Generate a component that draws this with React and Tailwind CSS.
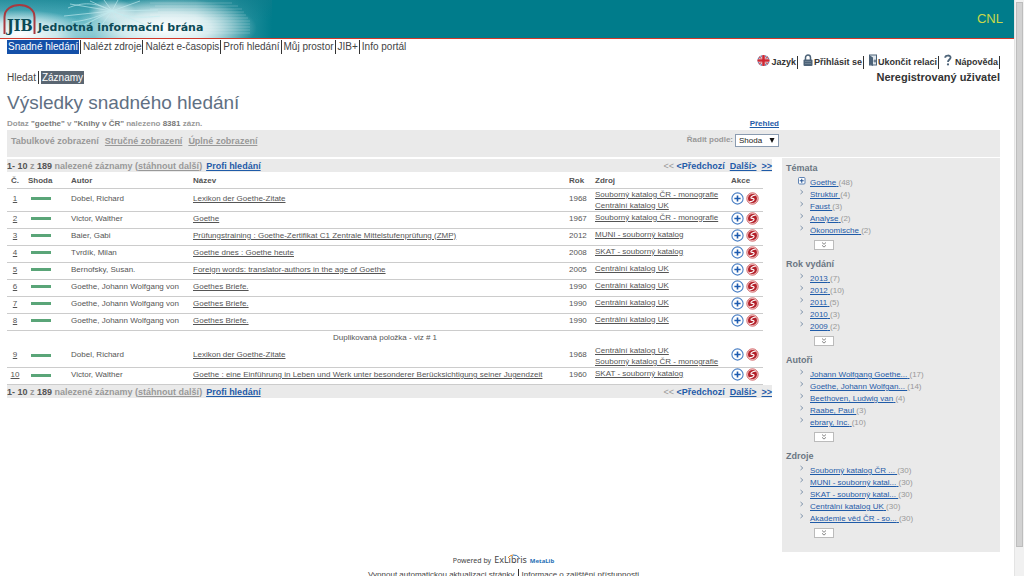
import React, { useState } from 'react';

const mainTabs = ['Snadné hledání', 'Nalézt zdroje', 'Nalézt e-časopis', 'Profi hledání', 'Můj prostor', 'JIB+', 'Info portál'];

const MONO = 'Souborný katalog ČR - monografie';
const UK = 'Centrální katalog UK';
const SKAT = 'SKAT - souborný katalog';

const records = [
  { id: 1, author: 'Dobel, Richard', title: 'Lexikon der Goethe-Zitate', year: 1968, sources: [MONO, UK] },
  { id: 2, author: 'Victor, Walther', title: 'Goethe', year: 1967, sources: [MONO] },
  { id: 3, author: 'Baier, Gabi', title: 'Prüfungstraining : Goethe-Zertifikat C1 Zentrale Mittelstufenprüfung (ZMP)', year: 2012, sources: ['MUNI - souborný katalog'] },
  { id: 4, author: 'Tvrdík, Milan', title: 'Goethe dnes : Goethe heute', year: 2008, sources: [SKAT] },
  { id: 5, author: 'Bernofsky, Susan.', title: 'Foreign words: translator-authors in the age of Goethe', year: 2005, sources: [UK] },
  { id: 6, author: 'Goethe, Johann Wolfgang von', title: 'Goethes Briefe.', year: 1990, sources: [UK] },
  { id: 7, author: 'Goethe, Johann Wolfgang von', title: 'Goethes Briefe.', year: 1990, sources: [UK] },
  { id: 8, author: 'Goethe, Johann Wolfgang von', title: 'Goethes Briefe.', year: 1990, sources: [UK] },
  { id: 9, duplicateOf: 1, author: 'Dobel, Richard', title: 'Lexikon der Goethe-Zitate', year: 1968, sources: [UK, MONO] },
  { id: 10, author: 'Victor, Walther', title: 'Goethe : eine Einführung in Leben und Werk unter besonderer Berücksichtigung seiner Jugendzeit', year: 1960, sources: [SKAT] },
];

const facets = [
  { title: 'Témata', items: [['Goethe', 48], ['Struktur', 4], ['Faust', 3], ['Analyse', 2], ['Ökonomische', 2]], expandable: true },
  { title: 'Rok vydání', items: [['2013', 7], ['2012', 10], ['2011', 5], ['2010', 3], ['2009', 2]] },
  { title: 'Autoři', items: [['Johann Wolfgang Goethe...', 17], ['Goethe, Johann Wolfgan...', 14], ['Beethoven, Ludwig van', 4], ['Raabe, Paul', 3], ['ebrary, Inc.', 10]] },
  { title: 'Zdroje', items: [['Souborný katalog ČR ...', 30], ['MUNI - souborný katal...', 30], ['SKAT - souborný katal...', 30], ['Centrální katalog UK', 30], ['Akademie věd ČR - so...', 30]] },
];

// Icons
const FlagIcon = () => (
  <svg width="13" height="13" viewBox="0 0 13 13" aria-hidden="true">
    <defs>
      <clipPath id="flag"><ellipse cx="6.5" cy="6.5" rx="6" ry="5.5" /></clipPath>
    </defs>
    <g clipPath="url(#flag)">
      <rect width="13" height="13" fill="#4a5f96" />
      <path d="M0 1 L13 12 M13 1 L0 12" stroke="#e6dfe6" strokeWidth="2.4" />
      <path d="M0 1 L13 12 M13 1 L0 12" stroke="#c8404a" strokeWidth="1.2" />
      <path d="M6.5 0V13M0 6.5H13" stroke="#f2ecee" strokeWidth="3.6" />
      <path d="M6.5 0V13M0 6.5H13" stroke="#cf2733" strokeWidth="2.6" />
    </g>
  </svg>
);

const LockIcon = () => (
  <svg width="10" height="13" viewBox="0 0 10 13" aria-hidden="true">
    <path d="M2.5 6V3.6a2.5 2.7 0 0 1 5 0V6" fill="none" stroke="#4d6378" strokeWidth="1.5" />
    <rect x="0.5" y="5.5" width="9" height="6.5" rx="1" fill="#4d6378" />
    <path d="M2 7.5h6M2 9.5h6" stroke="#8496a6" strokeWidth="0.6" />
  </svg>
);

const ExitIcon = () => (
  <svg width="8" height="13" viewBox="0 0 8 13" aria-hidden="true">
    <rect x="0.5" y="1" width="7" height="10" fill="#dfe6ec" stroke="#4d6378" />
    <path d="M1 1.5 L4 3.5V12L1 10.5Z" fill="#4d6378" />
    <path d="M4.5 7h2.5M6 5.5v3" stroke="#4d6378" strokeWidth="1" />
  </svg>
);

const HelpIcon = () => (
  <svg width="10" height="13" viewBox="0 0 10 13" aria-hidden="true">
    <path d="M1.2 3.8C1.2 0.8 6.6 0.8 6.6 3.6C6.6 5.4 4 5.6 4 8" fill="none" stroke="#4d6378" strokeWidth="1.8" />
    <circle cx="4" cy="10.4" r="1.1" fill="#4d6378" />
  </svg>
);

const AddIcon = () => (
  <svg width="13" height="13" viewBox="0 0 13 13" aria-hidden="true">
    <circle cx="6.5" cy="6.5" r="5.6" fill="#fff" stroke="#4a7fc4" strokeWidth="1.1" />
    <path d="M6.5 3.4v6.2M3.4 6.5h6.2" stroke="#1d5bb0" strokeWidth="1.6" />
  </svg>
);

const SfxIcon = () => (
  <svg width="13" height="13" viewBox="0 0 13 13" aria-hidden="true">
    <circle cx="6.5" cy="6.5" r="5.7" fill="#f3cfcf" stroke="#cf5a5e" strokeWidth="0.9" />
    <circle cx="6.5" cy="6.5" r="4.5" fill="#b3202a" />
    <path d="M9.6 3.4C7.6 3 4.6 4.4 4.9 5.8C5.2 6.8 7.8 6 8.1 7.2C8.4 8.6 5.6 9.9 3.4 9.6" fill="none" stroke="#fff" strokeWidth="1.1" />
  </svg>
);

const DoubleDown = () => (
  <svg width="6" height="6" viewBox="0 0 6 6" aria-hidden="true">
    <path d="M1 0.5L3 2.3L5 0.5M1 3.3L3 5.1L5 3.3" fill="none" stroke="#777" strokeWidth="0.9" />
  </svg>
);

const BannerArt = () => (
  <svg className="absolute inset-0" width="272" height="38" viewBox="0 0 272 38" aria-hidden="true">
    <defs>
      <linearGradient id="sweep" x1="0" x2="1" y1="0" y2="0">
        <stop offset="0" stopColor="#5fb4c2" />
        <stop offset="0.25" stopColor="#4fafbd" />
        <stop offset="0.5" stopColor="#6cbcc7" />
        <stop offset="0.72" stopColor="#8ccad2" />
        <stop offset="0.88" stopColor="#2b93a0" />
        <stop offset="1" stopColor="#007c8b" />
      </linearGradient>
      <radialGradient id="glow">
        <stop offset="0" stopColor="#fff" />
        <stop offset="0.5" stopColor="#fff" stopOpacity="0.7" />
        <stop offset="1" stopColor="#fff" stopOpacity="0" />
      </radialGradient>
      <linearGradient id="shade" x1="0" x2="0" y1="0" y2="1">
        <stop offset="0" stopColor="#0d7c8b" stopOpacity="0.65" />
        <stop offset="1" stopColor="#0d7c8b" stopOpacity="0" />
      </linearGradient>
    </defs>
    <rect width="272" height="38" fill="url(#sweep)" />
    <rect width="272" height="20" fill="url(#shade)" />
    <ellipse cx="20" cy="34" rx="75" ry="24" fill="url(#glow)" />
    <ellipse cx="165" cy="28" rx="92" ry="30" fill="url(#glow)" />
    <ellipse cx="112" cy="11" rx="24" ry="12" fill="url(#glow)" opacity="0.6" />
    <g fill="none" stroke="#c4ecf0" strokeWidth="0.8" opacity="0.8">
      <path d="M112 11L70 4M112 11L64 16M112 11L80 27M112 11L98 30M112 11L122 30M112 11L146 25M112 11L158 10M112 11L140 1M112 11L104 0M112 11L90 1M112 11L118 0" />
      <path d="M68 8C82 2 96 2 112 11C128 18 142 18 160 16M72 22C90 20 98 16 112 11" />
    </g>
    <g stroke="#fff" strokeWidth="0.8" opacity="0.25">
      <path d="M150 3H232M155 6H238M150 9H242M158 12H244M150 15H246M160 18H248M150 21H250M165 24H250M170 27H250M175 30H250M180 33H250" />
    </g>
    <path d="M4.5 34V17C4.5 1 34.5 1 34.5 17V34" fill="none" stroke="#a83a40" strokeWidth="2" />
  </svg>
);

const Banner = () => (
  <header className="relative h-[39px] flex items-center justify-between bg-[#007c8b] border-b border-[#d0392b]">
    <BannerArt />
    <div className="relative flex items-baseline self-end pl-[7px] text-[#0b4a56]">
      <span className="w-[31px] font-['DejaVu_Serif_Condensed','DejaVu_Serif',serif] text-[16px] leading-[24px] font-bold">JIB</span>
      <span className="font-['DejaVu_Sans',sans-serif] text-[11px] leading-[14px] font-bold whitespace-nowrap">Jednotná informační brána</span>
    </div>
    <span className="pr-[11px] text-[13px] text-[#c9d84a]">CNL</span>
  </header>
);

const UserLinks = () => {
  const links = [
    { label: 'Jazyk', icon: FlagIcon },
    { label: 'Přihlásit se', icon: LockIcon },
    { label: 'Ukončit relaci', icon: ExitIcon },
    { label: 'Nápověda', icon: HelpIcon },
  ];
  return (
    <div className="flex justify-end gap-[5px] h-[15px] text-[9px] leading-[13px] font-bold text-[#333]">
      {links.map(({ label, icon: Icon }) => (
        <a key={label} href="#" className="flex items-start gap-px">
          <Icon />
          <span className="mt-[2px] pr-px border-r border-[#333]">{label}</span>
        </a>
      ))}
    </div>
  );
};

const ResultsBar = () => (
  <div className="flex items-center justify-between h-[13px] bg-[#eaeaea] text-[9px] font-bold text-[#999]">
    <div className="flex gap-1">
      <span>
        <b className="text-[#555]">1- 10</b> z <b className="text-[#555]">189</b> nalezené záznamy (<a href="#" className="underline">stáhnout další</a>)
      </span>
      <a href="#" className="text-[#1f5ba8] underline">Profi hledání</a>
    </div>
    <div className="flex gap-[5px] text-[#1f5ba8]">
      <span><span className="font-normal text-[#999]">&lt;&lt;</span> &lt;Předchozí</span>
      <a href="#" className="underline">Další&gt;</a>
      <a href="#" className="underline">&gt;&gt;</a>
    </div>
  </div>
);

const RecordRow = ({ record }) => (
  <tr className="h-[17px] border-b border-[#ccc]">
    <td className="pb-[2px] text-center"><a href="#" className="underline">{record.id}</a></td>
    <td className="pb-[2px]"><div className="ml-2 w-5 h-[3px] bg-[#5aa578]"></div></td>
    <td className="pb-[2px] whitespace-nowrap">{record.author}</td>
    <td className="pb-[2px] whitespace-nowrap"><a href="#" className="underline">{record.title}</a></td>
    <td className="pb-[2px]">{record.year}</td>
    <td className="align-top whitespace-nowrap">
      {record.sources.map((s) => (
        <a key={s} href="#" className="block leading-[11px] underline">{s}</a>
      ))}
    </td>
    <td className="pb-[3px]">
      <div className="flex gap-[2px]">
        <button type="button" aria-label="Přidat do schránky"><AddIcon /></button>
        <button type="button" aria-label="SFX"><SfxIcon /></button>
      </div>
    </td>
  </tr>
);

const ResultsTable = () => (
  <div className="pr-[9px]">
    <table className="w-full table-fixed border-collapse text-left text-[#555]">
      <colgroup>
        <col className="w-[16px]" />
        <col className="w-[48px]" />
        <col className="w-[122px]" />
        <col />
        <col className="w-[26px]" />
        <col className="w-[136px]" />
        <col className="w-[32px]" />
      </colgroup>
      <thead>
        <tr className="h-[16px] border-b border-[#ccc]">
          <th className="pt-[2px] text-center">Č.</th>
          <th className="pt-[2px] pl-[5px]">Shoda</th>
          <th className="pt-[2px]">Autor</th>
          <th className="pt-[2px]">Název</th>
          <th className="pt-[2px]">Rok</th>
          <th className="pt-[2px]">Zdroj</th>
          <th className="pt-[2px]">Akce</th>
        </tr>
      </thead>
      <tbody>
        {records.map((r) => (
          <React.Fragment key={r.id}>
            {r.duplicateOf && (
              <tr className="h-[15px]">
                <td colSpan={7} className="text-center">Duplikovaná položka - viz # {r.duplicateOf}</td>
              </tr>
            )}
            <RecordRow record={r} />
          </React.Fragment>
        ))}
      </tbody>
    </table>
  </div>
);

const Facet = ({ facet }) => (
  <section className="mb-2">
    <h2 className="mb-[3px] text-[9px] leading-[12px] font-bold text-[#6b7683]">{facet.title}</h2>
    <ul>
      {facet.items.map(([label, count], i) => (
        <li key={label} className="flex h-[12px] leading-[12px] text-[#999]">
          <span className="w-6 pl-3">
            {facet.expandable && i === 0 ? (
              <svg width="8" height="8" viewBox="0 0 8 8" aria-hidden="true">
                <rect x="0.5" y="0.5" width="6.5" height="6.5" rx="1" fill="#fff" stroke="#5f83b3" />
                <path d="M3.75 1.8v4M1.75 3.75h4" stroke="#1f4f93" />
              </svg>
            ) : (
              <svg width="8" height="6" viewBox="0 0 8 6" aria-hidden="true">
                <path d="M2.5 1L4.8 3L2.5 5" fill="none" stroke="#7d92ab" strokeWidth="1" />
              </svg>
            )}
          </span>
          <span><a href="#" className="text-[#1f5ba8] underline">{label} </a>({count})</span>
        </li>
      ))}
    </ul>
    <button type="button" aria-label="Zobrazit další" className="flex items-center justify-center mt-[3px] ml-7 w-5 h-[10px] bg-white border border-[#bbb]">
      <DoubleDown />
    </button>
  </section>
);

const App = () => {
  const [sort, setSort] = useState('Shoda');

  return (
    <div className="flex h-screen overflow-hidden bg-white font-['Liberation_Sans',Arial,sans-serif] text-[8px] leading-[12px]">
      <div className="flex-1 min-w-0 overflow-hidden">
        <Banner />

        <div className="pl-[7px] pr-[14px]">
          <nav className="flex h-[15px] pt-px text-[10px] leading-[13px] text-[#444]">
            {mainTabs.map((tab, i) => (
              <a
                key={tab}
                href="#"
                className={i === 0 ? 'px-px mr-px bg-[#1450a8] text-white' : 'pl-[2px] pr-px border-l border-[#333]'}
              >
                {tab}
              </a>
            ))}
          </nav>

          <UserLinks />

          <div className="flex justify-between items-center h-[16px] text-[10px] leading-[13px]">
            <nav className="flex text-[#444]">
              <a href="#" className="pr-[2px] border-r border-[#333]">Hledat</a>
              <a href="#" className="ml-[2px] px-px bg-[#5a6672] text-white">Záznamy</a>
            </nav>
            <span className="text-[11px] font-bold text-[#333]">Neregistrovaný uživatel</span>
          </div>

          <h1 className="pt-[6px] text-[19px] leading-[24px] text-[#5f7083]">Výsledky snadného hledání</h1>

          <div className="flex justify-between h-[15px] pt-[3px] pr-[221px] font-bold text-[#999]">
            <p>Dotaz <b className="text-[#777]">"goethe"</b> v <b className="text-[#777]">"Knihy v ČR"</b> nalezeno <b className="text-[#777]">8381</b> zázn.</p>
            <a href="#" className="text-[#1f5ba8] underline">Přehled</a>
          </div>

          <div className="flex justify-between items-start h-[27px] pt-1 pl-1 pr-[221px] bg-[#eaeaea] font-bold text-[#999]">
            <div className="flex gap-[6px] pt-px text-[9px]">
              <span>Tabulkové zobrazení</span>
              <a href="#" className="underline">Stručné zobrazení</a>
              <a href="#" className="underline">Úplné zobrazení</a>
            </div>
            <div className="flex gap-[2px]">
              <label htmlFor="sort">Řadit podle:</label>
              <div className="relative">
                <select
                  id="sort"
                  value={sort}
                  onChange={(e) => setSort(e.target.value)}
                  className="block appearance-none w-11 h-[13px] pl-[3px] bg-white border border-[#8a9bb0] leading-[11px] font-normal text-[#222]"
                >
                  <option>Shoda</option>
                  <option>Autor</option>
                  <option>Název</option>
                  <option>Rok</option>
                </select>
                <svg className="absolute right-1 top-1 pointer-events-none" width="6" height="5" viewBox="0 0 6 5" aria-hidden="true">
                  <path d="M0.5 0H5.5L3 5Z" fill="#111" />
                </svg>
              </div>
            </div>
          </div>

          <div className="flex items-start gap-[10px] pt-px">
            <main className="flex-1 min-w-0 pt-px">
              <ResultsBar />
              <ResultsTable />
              <ResultsBar />
            </main>
            <aside className="w-[218px] pt-1 pb-[6px] pl-[4px] bg-[#eaeaea]">
              {facets.map((f) => <Facet key={f.title} facet={f} />)}
            </aside>
          </div>

          <footer className="flex flex-col items-center pt-[2px] text-[#444]">
            <div className="flex items-baseline gap-[3px] font-['Noto_Sans',sans-serif] text-[7px]">
              <span>Powered by</span>
              <span className="relative text-[9px]">
                ExLibris
                <svg className="absolute left-[13px] top-0" width="14" height="5" viewBox="0 0 14 5" aria-hidden="true">
                  <path d="M1 4Q3 1 6 1" fill="none" stroke="#e08a2c" />
                  <path d="M6 1Q10 0.5 12.5 4" fill="none" stroke="#2a6fb5" />
                </svg>
              </span>
              <b className="text-[6px] text-[#1f6fb5]">MetaLib</b>
            </div>
            <div className="flex gap-[3px] pt-[2px]">
              <a href="#">Vypnout automatickou aktualizaci stránky</a>
              <a href="#" className="pl-[3px] border-l border-[#333]">Informace o zajištění přístupnosti</a>
            </div>
          </footer>
        </div>
      </div>

      <div className="w-[10px] px-px pt-[2px] bg-[#f1f1f1] border-l border-[#e4e4e4]">
        <div className="h-[95%] bg-[#d2d2d2] border border-[#bdbdbd]"></div>
      </div>
    </div>
  );
};

export default App;
